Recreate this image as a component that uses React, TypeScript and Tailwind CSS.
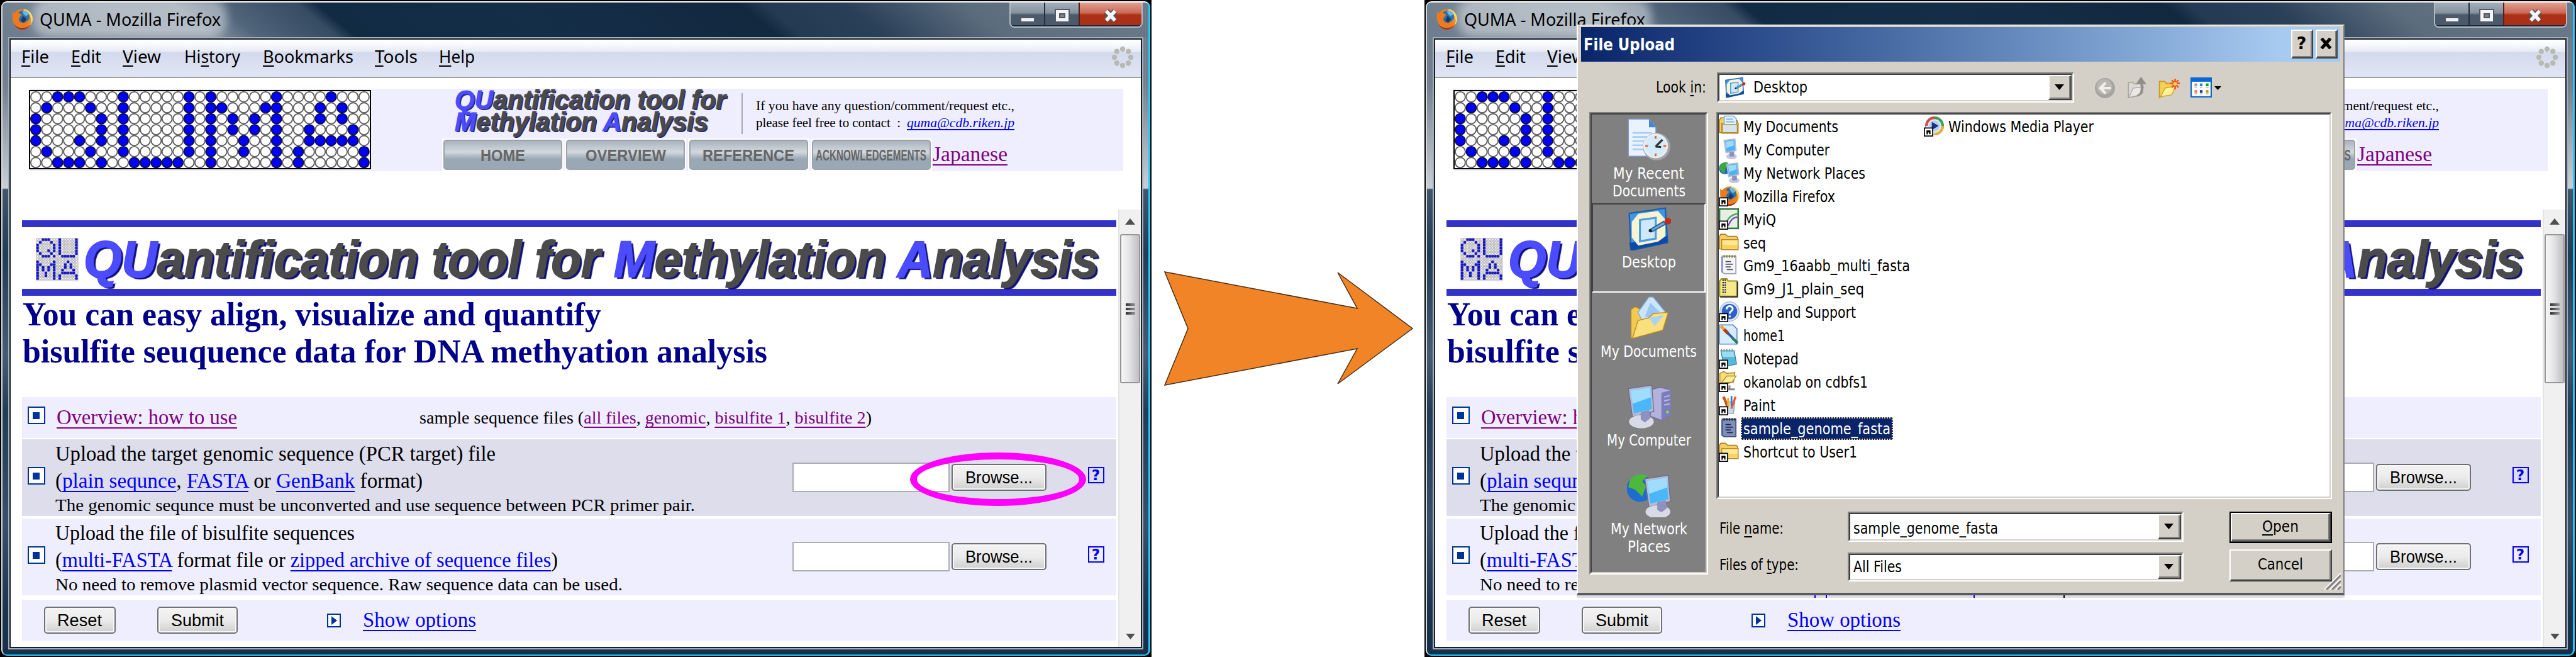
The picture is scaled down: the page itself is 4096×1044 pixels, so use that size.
import React, { useLayoutEffect, useRef } from "react";

/* Text squeezed or stretched to the width of its box. */
function Fit({ className = "", children }: { className?: string; children: React.ReactNode }) {
  const box = useRef<HTMLSpanElement>(null);
  const text = useRef<HTMLSpanElement>(null);
  useLayoutEffect(() => {
    const b = box.current, t = text.current;
    if (!b || !t) return;
    t.style.transform = "none";
    const k = b.getBoundingClientRect().width / t.getBoundingClientRect().width;
    t.style.transform = `scaleX(${k})`;
  });
  return (
    <span ref={box} className={`block shrink-0 whitespace-pre ${className}`}>
      <span ref={text} className="inline-block origin-left">{children}</span>
    </span>
  );
}

const U = ({ children }: { children: React.ReactNode }) => (
  <span className="underline decoration-2 underline-offset-[4px] [text-decoration-skip-ink:none]">{children}</span>
);
const Blue = ({ children }: { children: React.ReactNode }) => (
  <a className="text-[#0000ff] underline decoration-2 underline-offset-[5px] [text-decoration-skip-ink:none]">{children}</a>
);
const Purple = ({ children }: { children: React.ReactNode }) => (
  <a className="text-[#800080] underline decoration-2 underline-offset-[5px] [text-decoration-skip-ink:none]">{children}</a>
);

const FILLED = [
  [2, 3, 4, 8, 14, 16, 22, 27],
  [1, 5, 8, 14, 16, 17, 21, 22, 26, 28],
  [0, 6, 8, 14, 16, 18, 20, 22, 26, 28],
  [0, 6, 8, 14, 16, 18, 20, 22, 25, 29],
  [0, 4, 6, 8, 14, 16, 19, 22, 25, 26, 27, 28, 29],
  [1, 5, 8, 14, 16, 19, 22, 24, 30],
  [2, 3, 4, 6, 9, 10, 11, 12, 13, 16, 22, 24, 30],
];

function QumaLogo() {
  return (
    <svg className="mt-[2px] h-[126px] w-[544px] shrink-0" viewBox="0 0 544 126">
      <rect x="1" y="1" width="542" height="124" fill="#fff" stroke="#000" strokeWidth="2" />
      {FILLED.map((row, r) =>
        Array.from({ length: 31 }, (_, c) => (
          <circle key={`${r}-${c}`} cx={10.9 + c * 17.4} cy={10.9 + r * 17.4} r="8"
            fill={row.includes(c) ? "#0000ff" : "#fff"}
            stroke={row.includes(c) ? "#101040" : "#606060"} strokeWidth="1.900" />
        ))
      )}
    </svg>
  );
}

function SmallLogo() {
  return (
    <svg className="h-[69px] w-[68px] shrink-0" viewBox="0 0 15.4 15.6">
      <rect width="15.4" height="15.6" fill="#dcdce0" />
      {Array.from({ length: 15 }, (_, r) =>
        Array.from({ length: 15 }, (_, c) => <circle key={`${r}-${c}`} cx={c + 0.6} cy={r + 0.6} r="0.36" fill="#fff" stroke="#a8a8a8" strokeWidth="0.22" />)
      )}
      {FILLED.map((row, r) =>
        row.map((c) => {
          const low = c >= 16;
          return <rect key={`${r}-${c}`} x={(low ? c - 16 : c) + 0.15} y={(low ? r + 8 : r) + 0.15} width="0.92" height="0.92" fill="#1414c8" />;
        })
      )}
    </svg>
  );
}

function FirefoxArt() {
  return (
    <g>
      <circle cx="8.3" cy="8" r="7" fill="#e8861c" />
      <path d="M9 1a7 7 0 0 1 4.5 11.6C15.6 8 13 3.600 9 3z" fill="#fbd45c" />
      <circle cx="8.600" cy="6.600" r="4.600" fill="#2a6fae" />
      <path d="M8 2.400c2-.8 4 .5 4.600 2.400l-2 1.200L9 4.800z" fill="#6fb6e0" />
      <path d="M8.500 6l2.500 2-2 3-2-2z" fill="#153a66" />
      <path d="M1 2.500c.5 1 1 1.500 1.800 1.300L4.600 2c.1 1 .5 1.700 1.500 2.200L7.600 5 6 7c-1 1-.5 3 1.500 3.600 2 .4 4-.6 5-2.400.4 3-1.600 5.400-4.500 5.600C4 14 1 11 1 7z" fill="#ee7a1c" />
      <path d="M2 11.500c2.500 3.200 8 4.200 11.500.6-1.500 3-4.500 3.600-6 3.400-2.500-.3-4.500-1.900-5.500-4z" fill="#b5281a" />
    </g>
  );
}

function WindowButtons() {
  return (
    <div className="flex h-[40px] w-[212px] overflow-hidden rounded-b-[8px] border-x-2 border-b-2 border-[#b4bcc6] bg-[#1b2836] p-0 pb-[2px]">
      <div className="flex w-[55px] items-center justify-center border-r-2 border-[#222e3c] bg-linear-to-b from-[#a5afba] from-0% via-[#8793a0] via-45% to-[#4a5a6a] to-55%">
        <div className="mt-[18px] h-[9px] w-[24px] border-2 border-[#525867] bg-[#f3f3f3]" />
      </div>
      <div className="flex w-[55px] items-center justify-center border-r-2 border-[#52201c] bg-linear-to-b from-[#a5afba] from-0% via-[#8793a0] via-45% to-[#4a5a6a] to-55%">
        <svg className="mt-[6px] h-[24px] w-[26px]" viewBox="0 0 26 24">
          <rect x="1" y="1" width="24" height="22" fill="#525867" />
          <rect x="3" y="3" width="20" height="18" fill="#f4f4f4" />
          <rect x="8" y="8" width="10" height="8" fill="#525867" />
          <rect x="10" y="10" width="6" height="4" fill="#76818e" />
        </svg>
      </div>
      <div className="flex flex-1 items-center justify-center bg-linear-to-b from-[#e0a094] from-0% via-[#cc6a56] via-45% to-[#ac2f18] to-55%">
        <svg className="mt-[5px] h-[24px] w-[26px]" viewBox="0 0 26 24">
          <path d="M6 5l14 14M20 5L6 19" stroke="#525867" strokeWidth="10" />
          <path d="M6 4.500l14 15M20 4.500l-14 15" stroke="#f6f6f6" strokeWidth="5.500" />
        </svg>
      </div>
    </div>
  );
}

function NavButton({ children, className }: { children: React.ReactNode; className: string }) {
  return (
    <div className="h-[52px] w-[193px] bg-white/80 p-[2px]">
      <div className="flex h-full items-center justify-center rounded-[5px] border-2 border-[#9ea2a6] bg-linear-to-b from-[#a9b4be] via-[#d3d8de] via-40% to-[#9aa8b5] to-65% pt-[1px] font-['Liberation_Sans'] font-bold leading-[44px] text-[#666]">
        <Fit className={className}>{children}</Fit>
      </div>
    </div>
  );
}

function Bullet({ className }: { className: string }) {
  return (
    <span className={`flex h-[28px] w-[28px] shrink-0 items-center justify-center border-2 border-[#003399] bg-white ${className}`}>
      <span className="h-[11px] w-[11px] bg-[#003399]" />
    </span>
  );
}

function AeroButton({ className, textClass, children }: { className: string; textClass: string; children: React.ReactNode }) {
  return (
    <button className={`flex h-[43px] shrink-0 items-center justify-center rounded-[5px] border-2 border-[#707070] bg-linear-to-b from-[#f3f3f3] from-0% via-[#ebebeb] via-50% to-[#cfcfcf] pt-[2px] font-['Liberation_Sans'] text-[27px] leading-[37px] text-black shadow-[inset_0_0_0_2px_#f8f8f8] ${className}`}>
      <Fit className={textClass}>{children}</Fit>
    </button>
  );
}

function FileField() {
  return (
    <>
      <div className="mt-[37px] h-[47px] w-[250px] shrink-0 border-2 border-[#abadb3] bg-white" />
      <AeroButton className="ml-[3px] mt-[39px] w-[151px]" textClass="w-[107px]">Browse...</AeroButton>
      <span className="ml-[66px] mt-[44px] flex h-[26px] w-[26px] shrink-0 items-center justify-center border-2 border-[#0000ff] font-['DejaVu_Sans'] text-[23px] font-bold leading-[22px] text-[#0000ff]">?</span>
    </>
  );
}

function Browser({ marked, children }: { marked?: boolean; children?: React.ReactNode }) {
  return (
    <div className="relative h-[1044px] w-[1831px] shrink-0 bg-black p-[2px]">
      <div className="flex h-[1040px] flex-col overflow-hidden rounded-[9px] border-y-[2px] border-l-2 border-r-[3px] border-b-[#22ccff] border-l-[#d8dde2] border-r-[#22ccff] border-t-white bg-[linear-gradient(to_bottom,#6a7a8a_0,#74808f_130px,#c9ced4_295px,#40566c_297px,#223c55_400px,#465c74_560px,#233c55_650px,#38506a_830px,#1c344e_960px,#16304a_100%)]">
        <div className="flex h-[55px] shrink-0 items-start bg-[linear-gradient(40deg,#6f7e8e_21px,#8391a0_150px,#8391a0_214px,#50647a_262px,#364c62_342px,#112b43_362px,#152e48_560px,#12283f_793px,#243a52_818px,#2a4058_902px,#5b6c7d_1024px,#6b7a89_1198px)] pl-[13px]">
          <svg className="mt-[8px] h-[36px] w-[37px] shrink-0" viewBox="0 0 16 16"><FirefoxArt /></svg>
          <div className="ml-[9px] mt-[3px] h-[42px] rounded-[14px] bg-white/40 shadow-[0_0_14px_10px_rgba(255,255,255,0.4)]">
            <Fit className="w-[288px] font-['Noto_Sans'] text-[27px] leading-[47px] text-black">QUMA - Mozilla Firefox</Fit>
          </div>
          <div className="ml-auto mr-[9px]"><WindowButtons /></div>
        </div>
        <div className="mb-[8px] ml-[9px] mr-[8px] flex-1 overflow-hidden border-2 border-[#a5adb8]">
          <div className="flex h-full flex-col overflow-hidden border-2 border-[#131f2b] bg-white">
            {/* menu bar */}
            <div className="flex h-[61px] shrink-0 border-b-2 border-[#a0a0a0] bg-[linear-gradient(to_bottom,#ffffff_0,#f8f9fd_8px,#e6eaf4_19px,#d4daed_20px,#e1e6f5_59px)] pl-[17px]">
              <div className="flex h-[59px] font-['Noto_Sans'] text-[27px] leading-[54px] text-black">
                <Fit className="w-[44px]"><U>F</U>ile</Fit>
                <Fit className="ml-[35px] w-[48px]"><U>E</U>dit</Fit>
                <Fit className="ml-[34px] w-[61px]"><U>V</U>iew</Fit>
                <Fit className="ml-[37px] w-[89px]">Hi<U>s</U>tory</Fit>
                <Fit className="ml-[36px] w-[144px]"><U>B</U>ookmarks</Fit>
                <Fit className="ml-[34px] w-[68px]"><U>T</U>ools</Fit>
                <Fit className="ml-[34px] w-[57px]"><U>H</U>elp</Fit>
              </div>
              <svg className="ml-auto mr-[11px] mt-[10px] h-[36px] w-[36px]" viewBox="-18 -18 36 36">
                {[0, 45, 90, 135, 180, 225, 270, 315].map((a) => (
                  <circle key={a} r="4.200" cy="-13" transform={`rotate(${a})`} fill="#b8b8b4" />
                ))}
              </svg>
            </div>
            {/* site header */}
            <div className="ml-[29px] mt-[17px] flex h-[131px] w-[1740px] shrink-0 bg-[#eeeeff]">
              <QumaLogo />
              <div className="ml-[113px]">
                <div className="flex h-[79px] pl-[20px]">
                  <div className="w-[456px] font-['Liberation_Sans'] text-[42px] font-bold italic leading-[35px] text-[#4a4a4a] [-webkit-text-stroke:1px] [text-shadow:2px_2px_0_#26267a]">
                    <Fit className="w-[431px]"><span className="text-[#4b4bff]">QU</span>antification tool for</Fit>
                    <Fit className="w-[403px]"><span className="text-[#4b4bff]">M</span>ethylation <span className="text-[#4b4bff]">A</span>nalysis</Fit>
                  </div>
                  <div className="mt-[7px] h-[65px] w-[2px] bg-[#a8a8b0]" />
                  <div className="ml-[21px] mt-[14px] font-['Liberation_Serif'] text-[20px] leading-[27px] text-black">
                    <Fit className="w-[411px]">If you have any question/comment/request etc.,</Fit>
                    <div className="flex">
                      <Fit className="w-[230px]">please feel free to contact  :</Fit>
                      <Fit className="ml-[10px] w-[171px] italic"><a className="text-[#0000ff] underline decoration-2 underline-offset-[3px] [text-decoration-skip-ink:none]">quma@cdb.riken.jp</a></Fit>
                    </div>
                  </div>
                </div>
                <div className="flex gap-[2.300px]">
                  <NavButton className="w-[71px] text-[26px]">HOME</NavButton>
                  <NavButton className="w-[128px] text-[26px]">OVERVIEW</NavButton>
                  <NavButton className="w-[146px] text-[26px]">REFERENCE</NavButton>
                  <NavButton className="w-[176px] text-[24px]">ACKNOWLEDGEMENTS</NavButton>
                  <Fit className="-ml-[1px] mt-[5px] w-[119px] font-['Liberation_Serif'] text-[34.700px] leading-[40px]"><Purple>Japanese</Purple></Fit>
                </div>
              </div>
            </div>
            {/* scrolling page */}
            <div className="mt-[61px] flex flex-1 overflow-hidden">
              <div className="w-[1761px] shrink-0 pl-[17.500px] pt-[17px] font-['Liberation_Serif'] text-black">
                <div className="h-[11px] w-[1740px] bg-[#3333cc]" />
                <div className="flex h-[98px] items-start pl-[22px]">
                  <div className="mt-[17px]"><SmallLogo /></div>
                  <Fit className="ml-[8px] mt-[5px] w-[1614px] font-['Liberation_Sans'] text-[81px] font-bold italic leading-[92px] text-[#4b4b4b] [-webkit-text-stroke:2px] [text-shadow:4px_3px_1px_#10107a]">
                    <span className="text-[#4b4bff]">QU</span>antification tool for <span className="text-[#4b4bff]">M</span>ethylation <span className="text-[#4b4bff]">A</span>nalysis
                  </Fit>
                </div>
                <div className="h-[11px] w-[1740px] bg-[#3333cc]" />
                <div className="h-[161px] pl-[1px] pt-[1px] text-[52px] font-bold leading-[58.500px] text-[#00008b]">
                  <Fit className="w-[920px]">You can easy align, visualize and quantify</Fit>
                  <Fit className="w-[1184px]">bisulfite seuquence data for DNA methyation analysis</Fit>
                </div>
                <div className="flex h-[65px] w-[1740px] bg-[#eeeeff] pl-[9px]">
                  <Bullet className="mt-[15px]" />
                  <div className="ml-[18px] w-[577px]">
                    <Fit className="mt-[2px] w-[287px] text-[34.700px] leading-[60px]"><Purple>Overview: how to use</Purple></Fit>
                  </div>
                  <Fit className="mt-[3px] w-[719px] text-[28px] leading-[60px]">sample sequence files (<Purple>all files</Purple>, <Purple>genomic</Purple>, <Purple>bisulfite 1</Purple>, <Purple>bisulfite 2</Purple>)</Fit>
                </div>
                <div className="relative mt-[2px] flex h-[122px] w-[1740px] bg-[#ddddec] pl-[9px]">
                  <Bullet className="mt-[44px]" />
                  <div className="ml-[16px] w-[1172px] pt-px text-[34.700px] leading-[43.400px]">
                    <Fit className="w-[700px]">Upload the target genomic sequence (PCR target) file</Fit>
                    <Fit className="w-[584px]">(<Blue>plain sequnce</Blue>, <Blue>FASTA</Blue> or <Blue>GenBank</Blue> format)</Fit>
                    <Fit className="-mt-px w-[1017px] text-[28px] leading-[35px]">The genomic sequnce must be unconverted and use sequence between PCR primer pair.</Fit>
                  </div>
                  <FileField />
                  {marked && <div className="absolute left-[1412px] top-[21px] h-[85px] w-[280px] rounded-[50%] border-[11px] border-[#ff00ff]" />}
                </div>
                <div className="mt-[4px] flex h-[122px] w-[1740px] bg-[#eeeeff] pl-[9px]">
                  <Bullet className="mt-[44px]" />
                  <div className="ml-[16px] w-[1172px] pt-px text-[34.700px] leading-[43.400px]">
                    <Fit className="w-[476px]">Upload the file of bisulfite sequences</Fit>
                    <Fit className="w-[799px]">(<Blue>multi-FASTA</Blue> format file or <Blue>zipped archive of sequence files</Blue>)</Fit>
                    <Fit className="-mt-px w-[902px] text-[28px] leading-[35px]">No need to remove plasmid vector sequence. Raw sequence data can be used.</Fit>
                  </div>
                  <FileField />
                </div>
                <div className="mt-[7px] flex h-[65px] w-[1740px] bg-[#eeeeff] pl-[35px]">
                  <AeroButton className="mt-[11px] w-[114px]" textClass="w-[71px]">Reset</AeroButton>
                  <AeroButton className="ml-[66px] mt-[11px] w-[128px]" textClass="w-[84px]">Submit</AeroButton>
                  <span className="ml-[142px] mt-[22px] flex h-[22px] w-[22px] items-center justify-center border-2 border-[#003399] bg-white">
                    <svg className="h-[14px] w-[12px]" viewBox="0 0 12 14"><path d="M2 0l9 7-9 7z" fill="#003399" /></svg>
                  </span>
                  <Fit className="ml-[35px] mt-[3px] w-[180px] text-[34.700px] leading-[58px]"><Blue>Show options</Blue></Fit>
                </div>
              </div>
              {/* scroll bar */}
              <div className="flex w-[36px] flex-col items-center border-l-2 border-[#e4e4e4] bg-[#f0f0f0]">
                <svg className="mt-[14px] h-[10px] w-[16px]" viewBox="0 0 16 10"><path d="M8 0l8 10H0z" fill="#505050" /></svg>
                <div className="mt-[15px] flex h-[237px] w-[32px] flex-col items-center justify-center gap-[3px] rounded-[3px] border-2 border-[#979797] bg-linear-to-r from-[#f7f7f7] via-[#e4e4e6] via-45% to-[#bfbfc4]">
                  <i className="h-[4px] w-[15px] bg-linear-to-r from-[#333] to-[#999]" />
                  <i className="h-[4px] w-[15px] bg-linear-to-r from-[#333] to-[#999]" />
                  <i className="h-[4px] w-[15px] bg-linear-to-r from-[#333] to-[#999]" />
                </div>
                <svg className="mb-[12px] mt-auto h-[9px] w-[15px]" viewBox="0 0 16 10"><path d="M0 0h16L8 10z" fill="#505050" /></svg>
              </div>
            </div>
          </div>
        </div>
      </div>
      {children}
    </div>
  );
}

/* ---------- 16px icons of the file list ---------- */

const Shortcut = () => (
  <g>
    <rect x=".4" y="9.600" width="6.200" height="6" fill="#fff" stroke="#000" strokeWidth="0.800" />
    <path d="M2 11.400h3v2.800H4v-1.300H3v1.500H2z" fill="#000" />
  </g>
);
const Folder = () => (
  <g>
    <path d="M.5 13V3.500L1.500 2H5l1.500 1.500H13l1 1V13z" fill="#f3d064" stroke="#a8781c" strokeWidth="0.700" />
    <path d="M2.200 6h12.300v7.500H2.200z" fill="#fde793" stroke="#b98a28" strokeWidth="0.700" />
    <path d="M2.600 10h11.500v3H2.600z" fill="#f6c74c" opacity=".7" />
  </g>
);
const Pc = () => (
  <g>
    <path d="M4 1.500l8-1 .8 8.500-7.300 1.600z" fill="#4db4f2" stroke="#b4bcd0" strokeWidth="1" />
    <path d="M5 2.300l6-.7.3 3.600-5.600 2z" fill="#9ddafc" />
    <ellipse cx="9.500" cy="13.500" rx="4" ry="2.200" fill="#c6c8de" />
    <path d="M8 10h3.500v3.500H8z" fill="#8e90b8" />
  </g>
);
const DesktopArt = () => (
  <g>
    <path d="M.8 2.500L13.600.6l.8 12.200L1.400 15.600z" fill="#3f96e4" stroke="#1b5dae" strokeWidth="0.500" />
    <path d="M.8 13l13.500-2.600.1 2.400L1.400 15.600z" fill="#0d4ba4" />
    <path d="M4 2.600l7-1 2.600 3v6L11 12.500l-7 1.400L1.700 11V5.500z" fill="#fbf3d0" />
    <path d="M4.600 4.800l5.600-.8v7.400l-5.600 1z" fill="#cfe8fc" stroke="#4a9ee0" strokeWidth="0.700" />
    <path d="M8 8.300l5-3 .7 1-4.900 2.700z" fill="#6aa6da" stroke="#2c5f96" strokeWidth="0.400" />
    <circle cx="14.500" cy="5.200" r="1.200" fill="#c22a1a" />
    <circle cx="8.300" cy="8.600" r=".6" fill="#222" />
  </g>
);
const NotePage = ({ dark }: { dark?: boolean }) => (
  <g>
    <path d="M2.500 1.500h10.300v13H4l-1.500-1z" fill={dark ? "#7f8fb8" : "#f4f5f8"} stroke={dark ? "#3d4c80" : "#9aa0b4"} strokeWidth="0.800" />
    <path d="M2.500 2v11.500" stroke={dark ? "#4b5ca0" : "#8088d8"} strokeWidth="1.200" />
    <path d="M4 .6v2M6 .6v2M8 .6v2M10 .6v2M12 .6v2" stroke={dark ? "#2a2f45" : "#93803c"} strokeWidth="1" />
    <path d="M5 5.500h4M5 7.500h5.500M5 9.500h4M6 11.500h4.500" stroke={dark ? "#1c2850" : "#555"} strokeWidth="0.800" />
  </g>
);

const ART: Record<string, React.ReactNode> = {
  docs: <g><Folder /><path d="M4 .6h7l2 2V9H4z" fill="#e6f3ff" stroke="#5a9bd8" strokeWidth="0.600" /><path d="M5.500 3h5M5.500 5h6" stroke="#6ab0e8" strokeWidth="0.800" /><path d="M2.800 7h11v6h-11z" fill="#d6e4ee" stroke="#b98a28" strokeWidth="0.600" /></g>,
  pc: <Pc />,
  net: <g><circle cx="4.500" cy="5" r="4.400" fill="#2266c0" /><path d="M1 3c2-3 5-3 6-2L5 5 4 9C1 7 0 5 1 3z" fill="#3ca83c" /><g transform="translate(2 .5)"><Pc /></g></g>,
  firefox: <g><FirefoxArt /><Shortcut /></g>,
  myiq: <g><rect x=".5" y=".5" width="14" height="14.500" fill="#e6efe6" stroke="#35743a" strokeWidth="1.200" /><path d="M5 12C7 7 9 5 14 4" stroke="#48a85c" strokeWidth="1.100" fill="none" /><path d="M7 13c2-4 3-6 7-6.500" stroke="#8648b8" strokeWidth="1.100" fill="none" /><Shortcut /></g>,
  folder: <Folder />,
  note: <NotePage />,
  noteSel: <NotePage dark />,
  zip: <g><path d="M.6 14V2.600L2 1h4l1 1.600h6.500V14z" fill="#f8e88c" stroke="#98941c" strokeWidth="1" /><path d="M14 3v11.500H1" stroke="#222" strokeWidth="0.800" fill="none" /><path d="M4 1.500v11" stroke="#222" strokeWidth="2.600" strokeDasharray="1 .8" /><path d="M4 1.500v11" stroke="#eee" strokeWidth="0.600" /></g>,
  help: <g><circle cx="8" cy="8" r="7.200" fill="#e6eefb" stroke="#9cb4dc" strokeWidth="0.600" /><circle cx="8" cy="8" r="5.800" fill="#2c62c8" /><path d="M5.800 6.300c0-3 4.600-3 4.600-.3 0 1.700-2.200 1.700-2.200 3.600M8.200 11v1.400" stroke="#fff" strokeWidth="1.400" fill="none" /><Shortcut /></g>,
  home: <g><path d="M.6.6h10l3 3V15H.6z" fill="#d8eafc" stroke="#4a88c8" strokeWidth="0.700" /><path d="M1.500 1.500L5 5" stroke="#f0a030" strokeWidth="2.200" /><path d="M4 4l3 3" stroke="#b03a1c" strokeWidth="2.400" /><path d="M6.500 6.500L14 14" stroke="#2c5aa8" strokeWidth="1.800" /><path d="M10 10.500l4 4" stroke="#2c8a3c" strokeWidth="1.600" /></g>,
  notepad: <g><path d="M1.500 2.500h10l1.800 10L4 14.500z" fill="#58b8dc" stroke="#2e80a8" strokeWidth="0.600" /><path d="M2 3h9l.8 4H2.800z" fill="#9adcf2" /><path d="M2 1v2M4 1v2M6 1v2M8 1v2M10 1v2" stroke="#8c8c7c" strokeWidth="0.800" /><Shortcut /></g>,
  share: <g><path d="M.8 9V2l3-1.400L6 2l6-.5-1 7-8 2z" fill="#f8dc78" stroke="#b08a28" strokeWidth="0.700" /><path d="M2 9l4-5h7l-3 4.500z" fill="#fdee9e" stroke="#b08a28" strokeWidth="0.600" /><path d="M6 14h6M8 11v3" stroke="#888" strokeWidth="1.400" /><Shortcut /></g>,
  paint: <g><path d="M5 6h7l-1 8.500H6z" fill="#c8d8e6" stroke="#8a9cb0" strokeWidth="0.600" /><path d="M3.500 2l3 7" stroke="#c8521e" strokeWidth="2" /><path d="M7 3v7" stroke="#e8b428" strokeWidth="1.500" /><path d="M12.500 2L9.500 11" stroke="#e85a3a" strokeWidth="1.600" /><path d="M9.500 1.500V9" stroke="#4878c8" strokeWidth="1.300" /><Shortcut /></g>,
  shortcutFolder: <g><Folder /><Shortcut /></g>,
  wmp: <g><circle cx="8" cy="8" r="6.800" fill="#dfe8f8" stroke="#8a92a4" strokeWidth="0.600" /><path d="M8 2a6 6 0 0 1 6 6" stroke="#3ca048" strokeWidth="1.800" fill="none" /><path d="M14 8a6 6 0 0 1-6 6" stroke="#e8b428" strokeWidth="1.800" fill="none" /><path d="M2 8a6 6 0 0 1 6-6" stroke="#d84a3a" strokeWidth="1.800" fill="none" /><circle cx="8" cy="8" r="4" fill="#b6ccf0" /><path d="M6 5l5 3-5 3z" fill="#16308c" /><Shortcut /></g>,
};

const FILES: { icon: string; name: string; w: string; selected?: boolean }[] = [
  { icon: "docs", name: "My Documents", w: "w-[151px]" },
  { icon: "pc", name: "My Computer", w: "w-[137px]" },
  { icon: "net", name: "My Network Places", w: "w-[194px]" },
  { icon: "firefox", name: "Mozilla Firefox", w: "w-[146px]" },
  { icon: "myiq", name: "MyiQ", w: "w-[52px]" },
  { icon: "folder", name: "seq", w: "w-[36px]" },
  { icon: "note", name: "Gm9_16aabb_multi_fasta", w: "w-[265px]" },
  { icon: "zip", name: "Gm9_J1_plain_seq", w: "w-[192px]" },
  { icon: "help", name: "Help and Support", w: "w-[179px]" },
  { icon: "home", name: "home1", w: "w-[66px]" },
  { icon: "notepad", name: "Notepad", w: "w-[88px]" },
  { icon: "share", name: "okanolab on cdbfs1", w: "w-[198px]" },
  { icon: "paint", name: "Paint", w: "w-[51px]" },
  { icon: "noteSel", name: "sample_genome_fasta", w: "w-[234px]", selected: true },
  { icon: "shortcutFolder", name: "Shortcut to User1", w: "w-[181px]" },
];

function FileRow({ icon, name, w, selected }: { icon: string; name: string; w: string; selected?: boolean }) {
  return (
    <div className="flex h-[36.920px] items-start">
      <svg className="mt-[1px] h-[34px] w-[34px] shrink-0" viewBox="0 0 16 16">{ART[icon]}</svg>
      <div className={selected ? "mt-px ml-px h-[36px] border-2 border-dotted border-[#f5db95] bg-[#0a246a] px-[2px] text-white" : "ml-px h-[36px] px-[4px] pt-[2px]"}>
        <Fit className={`${w} leading-[36px] ${selected ? "-mt-px" : ""}`}>{name}</Fit>
      </div>
    </div>
  );
}

function Sunken({ className, inner = "", children }: { className: string; inner?: string; children?: React.ReactNode }) {
  return (
    <div className={`shrink-0 border-2 border-b-white border-l-[#808080] border-r-white border-t-[#808080] ${className}`}>
      <div className={`h-full border-2 border-b-[#d4d0c8] border-l-[#404040] border-r-[#d4d0c8] border-t-[#404040] ${inner}`}>{children}</div>
    </div>
  );
}

function Raised({ className, children }: { className: string; children?: React.ReactNode }) {
  return (
    <div className={`shrink-0 border-2 border-b-[#404040] border-l-white border-r-[#404040] border-t-white ${className}`}>
      <div className="flex h-full items-center justify-center border-b-2 border-r-2 border-[#808080] bg-[#d4d0c8]">{children}</div>
    </div>
  );
}

const DropArrow = () => (
  <svg className="h-[9px] w-[15px]" viewBox="0 0 15 9"><path d="M0 0h15L7.500 9z" fill="#000" /></svg>
);

/* ---------- 32px icons of the places bar ---------- */

const BigMonitor = () => (
  <g>
    <path d="M1 3L18 .5l1.500 19L4 23.500z" fill="#b9bbd2" stroke="#6a6c94" strokeWidth="0.600" />
    <path d="M2.600 4.500L17 2.300l1 15.500L5 21z" fill="#4cb6fa" />
    <path d="M2.600 4.500L17 2.300l.4 7L4 14z" fill="#9fdcfd" />
    <ellipse cx="10.500" cy="27" rx="9" ry="4.800" fill="#d9dae8" />
    <path d="M10 20l6-1.500 1 6-4 3-3-2z" fill="#9092be" />
  </g>
);

const PLACES = [
  {
    art: <g><path d="M1 1h15l5 6v21H1z" fill="#eaf2fe" stroke="#7f96cc" strokeWidth="0.700" /><path d="M16 1v6h5z" fill="#3c8ae0" /><path d="M4 11h14M4 14h14M4 17h14M4 20h14M4 23h14" stroke="#a8cdf6" strokeWidth="1.200" /><circle cx="21.500" cy="21" r="10" fill="#a2a4aa" /><circle cx="20.800" cy="20.500" r="9" fill="#eceef0" /><circle cx="20.800" cy="20.500" r="7.700" fill="#d2ecfa" /><path d="M20.800 21l5-5M20.800 21l4 .3" stroke="#333" strokeWidth="1.500" /><path d="M20.800 13.300v2M20.800 26v2M13.300 20.500h2M26.500 20.500h2" stroke="#e4632a" strokeWidth="1.300" /></g>,
    lines: [["My Recent", "w-[113px]"], ["Documents", "w-[116px]"]],
  },
  { art: <g transform="scale(2.050)"><DesktopArt /></g>, lines: [["Desktop", "w-[86px]"]], active: true },
  {
    art: <g><path d="M3 31V10l3-2 6 3 4 8z" fill="#f3c94f" stroke="#b98a20" strokeWidth="0.500" /><path d="M16 1l3 0 9 11-6 9-10-1-4-8z" fill="#cde5fb" stroke="#78aee4" strokeWidth="0.600" /><path d="M17 5l7 7-4 6-7-3z" fill="#9ac8f2" /><path d="M4 31L8 18l8-2 3-3 11-1-4 13z" fill="#fbdf7c" stroke="#b98a20" strokeWidth="0.600" /><path d="M16 16l11-2-7 8z" fill="#a8d2f6" /></g>,
    lines: [["My Documents", "w-[153px]"]],
  },
  {
    art: <g><path d="M17 4l7-2 8 2v18l-7 4-8-3z" fill="#b2b2da" stroke="#6a6ab0" strokeWidth="0.500" /><path d="M25 6l7-2v18l-7 4z" fill="#7c7cbc" /><path d="M27 9l4-1M27 12l4-1M27 15l4-1" stroke="#b8b8e0" strokeWidth="1" /><circle cx="29.500" cy="20" r="1" fill="#8ee04a" /><BigMonitor /></g>,
    lines: [["My Computer", "w-[134px]"]],
  },
  {
    art: <g><circle cx="9.500" cy="11" r="9.800" fill="#1f6cd0" /><path d="M2 5C5 0 13 0 15 2l-4 4 3 3-3 8-5-5-5-2z" fill="#4eb83c" /><g transform="translate(12 1)"><BigMonitor /></g></g>,
    lines: [["My Network", "w-[122px]"], ["Places", "w-[68px]"]],
  },
];

function Dialog() {
  return (
    <div className="absolute left-[242px] top-[39px] h-[911px] w-[1221px] bg-[#ddddec] font-['DejaVu_Sans'] text-[24px] text-black">
      <div className="h-[907px] border-b-4 border-l-2 border-r-2 border-t-2 border-b-[#5a5a5a] border-l-white border-r-[#808080] border-t-[#e6e3dd] bg-[#d4d0c8]">
        <div className="ml-[5px] mt-[2px] flex h-[55px] w-[1207px] items-start bg-linear-to-r from-[#0a246a] to-[#a6caf0] to-92% pl-[4px] pr-[4px] pt-[4px]">
          <Fit className="w-[145px] text-[26.500px] font-bold leading-[47px] text-white">File Upload</Fit>
          <Raised className="ml-auto h-[46px] w-[35px]"><span className="text-[27px] font-bold leading-[38px]">?</span></Raised>
          <Raised className="ml-[4px] h-[46px] w-[35px]">
            <svg className="h-[18px] w-[19px]" viewBox="0 0 19 18"><path d="M2.500 1l14 16M16.500 1l-14 16" stroke="#000" strokeWidth="5" /></svg>
          </Raised>
        </div>
        <div className="flex h-[80px] pl-[124px] pt-[17px]">
          <Fit className="w-[80px] leading-[48px]">Look <U>i</U>n:</Fit>
          <Sunken className="ml-[17px] h-[48px] w-[568px]" inner="flex bg-white pl-[8px]">
            <svg className="mt-[3px] h-[34px] w-[34px]" viewBox="0 0 16 16"><DesktopArt /></svg>
            <Fit className="ml-[12px] w-[86px] leading-[41px]">Desktop</Fit>
            <Raised className="ml-auto h-[40px] w-[37px]"><DropArrow /></Raised>
          </Sunken>
          <svg className="ml-[32px] mt-[8px] h-[34px] w-[34px]" viewBox="0 0 16 16">
            <circle cx="8" cy="8" r="7.500" fill="#a5a4a0" /><circle cx="7.500" cy="7" r="5.800" fill="#b8b7b2" />
            <path d="M12.500 8H5M8.500 4L4.500 8l4 4" stroke="#f0efec" strokeWidth="1.900" fill="none" />
          </svg>
          <svg className="ml-[17px] mt-[6px] h-[36px] w-[34px]" viewBox="0 0 16 17">
            <path d="M1.500 16V5l3-.5L6 6l5-.5 1.500 7-4 2.500z" fill="#dcdbd8" stroke="#a8a7a2" strokeWidth="0.800" />
            <path d="M2 16l3-7 8-1-2 6z" fill="#e9e8e6" stroke="#a8a7a2" strokeWidth="0.600" />
            <path d="M8 14c3-1 3-4 2.500-8H7l4-5.500L15 6h-2.500c.5 4 0 8-4.500 9z" fill="#8f8e8a" />
          </svg>
          <svg className="ml-[17px] mt-[8px] h-[34px] w-[34px]" viewBox="0 0 16 16">
            <path d="M.8 15V3h4l1 1.500H11V8z" fill="#f4d255" stroke="#c99a20" strokeWidth="0.900" />
            <path d="M1.500 14.500L5 8l8-1.500-3 6.500z" fill="#fff29a" stroke="#d4a426" strokeWidth="0.700" />
            <path d="M12.500 1v8M9 4.500h7M10 2l5 5.500M15 2l-5 5.500" stroke="#f8501c" strokeWidth="1.200" />
            <circle cx="12.500" cy="4.800" r="1.300" fill="#ffe24a" />
          </svg>
          <svg className="ml-[17px] mt-[8px] h-[32px] w-[34px]" viewBox="0 0 16 15">
            <rect x=".5" y=".5" width="15" height="14" fill="#fff" stroke="#0a66d0" />
            <rect width="16" height="3.200" fill="#0a66d0" />
            <rect x="3" y="4.500" width="2" height="2" fill="#9a94cc" /><rect x="7" y="4.500" width="2" height="2" fill="#1c84e4" /><rect x="11.500" y="4.500" width="2" height="2" fill="#149a14" />
            <rect x="3" y="9.500" width="2" height="2" fill="#f8744a" /><rect x="7" y="9.500" width="2" height="2" fill="#1a3490" /><rect x="11.500" y="9.500" width="2" height="2" fill="#c8960a" />
            <path d="M3 7.300h2M7 7.300h2M11.500 7.300h2M3 12.300h2M7 12.300h2M11.500 12.300h2" stroke="#bbb" strokeWidth="0.800" />
          </svg>
          <svg className="ml-[4px] mt-[22px] h-[6px] w-[11px]" viewBox="0 0 11 6"><path d="M0 0h11L5.500 6z" fill="#000" /></svg>
        </div>
        <div className="flex pl-[18px]">
          <Sunken className="h-[735px] w-[189px]" inner="bg-[#808080] text-white">
            {PLACES.map((p, i) => (
              <div key={i} className={`flex h-[141.300px] flex-col items-center border-2 pt-[3px] leading-[28.300px] ${p.active ? "border-b-white border-l-[#404040] border-r-white border-t-[#404040]" : "border-transparent"}`}>
                <svg className="h-[70px] w-[70px] shrink-0" viewBox="0 0 32 32">{p.art}</svg>
                <div className="mt-[5px] flex flex-col items-center">
                  {p.lines.map(([t, w]) => <Fit key={t} className={w}>{t}</Fit>)}
                </div>
              </div>
            ))}
          </Sunken>
          <div className="ml-[13px] w-[979px]">
            <Sunken className="h-[615px]" inner="flex bg-white">
              <div className="w-[326px] shrink-0">
                {FILES.map((f) => <FileRow key={f.name} {...f} />)}
              </div>
              <FileRow icon="wmp" name="Windows Media Player" w="w-[231px]" />
            </Sunken>
            <div className="mt-[20px] flex">
              <div className="w-[209px] pl-[5px]"><Fit className="w-[102px] leading-[54px]">File <U>n</U>ame:</Fit></div>
              <Sunken className="h-[48px] w-[534px]" inner="flex bg-white pl-[5px]">
                <Fit className="w-[230px] leading-[46px]">sample_genome_fasta</Fit>
                <Raised className="ml-auto h-[40px] w-[37px]"><DropArrow /></Raised>
              </Sunken>
              <div className="ml-[73px] h-[50px] w-[163px] border-2 border-black">
                <Raised className="h-[46px]"><Fit className="w-[58px] leading-[40px]"><U>O</U>pen</Fit></Raised>
              </div>
            </div>
            <div className="mt-[6px] flex">
              <div className="w-[209px] pl-[5px] pt-[4px]"><Fit className="w-[126px] leading-[43px]">Files of <U>t</U>ype:</Fit></div>
              <Sunken className="mt-[5px] h-[46px] w-[534px]" inner="flex bg-white pl-[5px]">
                <Fit className="w-[77px] leading-[39px]">All Files</Fit>
                <Raised className="ml-auto h-[38px] w-[37px]"><DropArrow /></Raised>
              </Sunken>
              <Raised className="ml-[73px] h-[51px] w-[163px]"><Fit className="w-[72px] leading-[43px]">Cancel</Fit></Raised>
            </div>
          </div>
        </div>
      </div>
      <svg className="absolute bottom-[13px] right-[6px] h-[27px] w-[27px]" viewBox="0 0 27 27">
        <path d="M1 27L27 1M10 27L27 10M19 27l8-8" stroke="#fff" strokeWidth="2" />
        <path d="M4 27L27 4M13 27l14-14M22 27l5-5" stroke="#808080" strokeWidth="3" />
      </svg>
      <div className="flex h-[4px] pl-[378px]">
        <i className="h-[4px] w-[2px] bg-[#0000ff]" />
        <i className="ml-[16px] h-[4px] w-[2px] bg-[#0000ff]" />
        <i className="ml-[233px] h-[4px] w-[2px] bg-[#0000ff]" />
        <i className="ml-[141px] h-[4px] w-[2px] bg-black" />
      </div>
    </div>
  );
}

export default function App() {
  return (
    <div className="flex h-[1044px] w-[4096px] overflow-hidden bg-white">
      <Browser marked />
      <div className="w-[434px] shrink-0 pl-[19px] pt-[428px]">
        <svg className="h-[186px] w-[398px]" viewBox="-2 -2 398 186">
          <path d="M0 2L306 60L275 3L394 92L275 180L306 124L0 182L37 92Z" fill="#f28428" stroke="#4a3018" strokeWidth="1.500" />
        </svg>
      </div>
      <Browser><Dialog /></Browser>
    </div>
  );
}
